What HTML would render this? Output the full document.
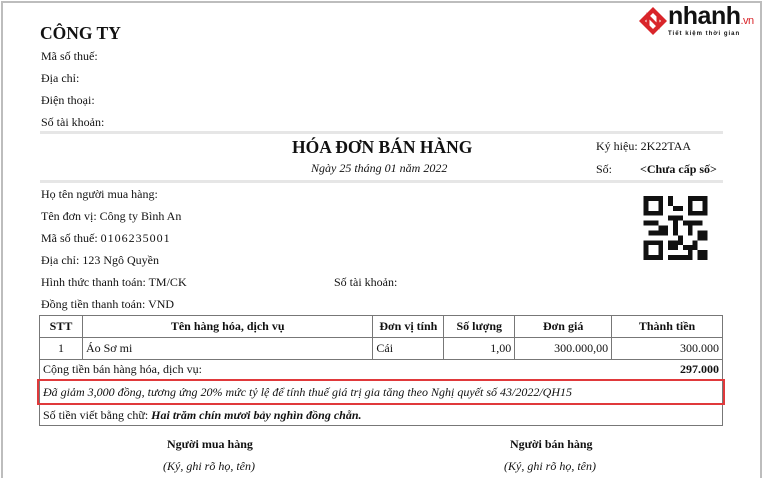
<!DOCTYPE html>
<html><head><meta charset="utf-8"><style>
*{margin:0;padding:0;box-sizing:border-box}
html,body{width:765px;height:478px;overflow:hidden}
body{background:#fff;font-family:"Liberation Serif",serif;font-size:12px;color:#111;position:relative}
.a{position:absolute;white-space:nowrap}
.frame{position:absolute;left:1px;top:1px;width:761px;height:477px;border:2px solid #bdbdbd;border-bottom:none}
.hl{position:absolute;height:3px;background:#e6e6e6}
table{position:absolute;left:39px;top:315px;width:684px;border-collapse:collapse}
td,th{border:1px solid #777;padding:0 3px;height:22px;font-size:12px}
th{font-weight:bold;text-align:center}
</style></head><body>
<div class="frame"></div>
<div class="a" style="left:40px;top:23px;font-size:17.5px;font-weight:bold">CÔNG TY</div>
<div class="a" style="left:41px;top:49px">Mã số thuế:</div>
<div class="a" style="left:41px;top:71px">Địa chỉ:</div>
<div class="a" style="left:41px;top:93px">Điện thoại:</div>
<div class="a" style="left:41px;top:115px">Số tài khoản:</div>
<div class="hl" style="left:40px;top:131px;width:683px"></div>
<div class="hl" style="left:40px;top:180px;width:683px"></div>

<svg class="a" style="left:638px;top:6px" width="30" height="30" viewBox="0 0 30 30"><polygon points="15,1 29,15 15,29 1,15" fill="#d9252a"/><polygon points="15,7 23,15 15,23 7,15" fill="#fff"/><path d="M10 21 V10 L20 20 V9" stroke="#d9252a" stroke-width="3" fill="none"/></svg>
<div class="a" style="left:668px;top:2px;font-family:'Liberation Sans',sans-serif;font-size:25px;font-weight:bold;color:#111;letter-spacing:-0.5px">nhanh<span style="font-size:11px;font-weight:normal;color:#d9252a">.vn</span></div>
<div class="a" style="left:668px;top:31px;font-family:'Liberation Sans',sans-serif;font-size:6px;font-weight:bold;letter-spacing:1px">Tiết kiệm thời gian</div>

<div class="a" style="left:292px;top:137px;font-size:17.5px;font-weight:bold">HÓA ĐƠN BÁN HÀNG</div>
<div class="a" style="left:311px;top:161px;font-style:italic">Ngày 25 tháng 01 năm 2022</div>
<div class="a" style="left:596px;top:139px">Ký hiệu: 2K22TAA</div>
<div class="a" style="left:596px;top:162px">Số:</div>
<div class="a" style="left:640px;top:162px;font-weight:bold">&lt;Chưa cấp số&gt;</div>

<svg class="a" style="left:643px;top:196px" width="65" height="64" viewBox="0 0 13 13" shape-rendering="crispEdges"><g fill="#111">
<path d="M0 0h4v4h-4zM9 0h4v4h-4zM0 9h4v4h-4z"/></g><g fill="#fff"><path d="M1 1h2v2h-2zM10 1h2v2h-2zM1 10h2v2h-2z"/></g>
<g fill="#111"><rect x="5" y="0" width="1" height="2"/><rect x="6" y="2" width="2" height="1"/><rect x="5" y="4" width="3" height="1"/><rect x="0" y="5" width="3" height="1"/><rect x="3" y="6" width="2" height="2"/><rect x="6" y="5" width="1" height="3"/><rect x="8" y="5" width="4" height="1"/><rect x="9" y="6" width="1" height="2"/><rect x="11" y="7" width="2" height="2"/><rect x="1" y="7" width="2" height="1"/><rect x="5" y="9" width="2" height="2"/><rect x="7" y="8" width="1" height="2"/><rect x="8" y="10" width="2" height="1"/><rect x="10" y="9" width="1" height="2"/><rect x="11" y="11" width="2" height="2"/><rect x="5" y="12" width="4" height="1"/><rect x="9" y="11" width="1" height="2"/></g></svg>

<div class="a" style="left:41px;top:187px">Họ tên người mua hàng:</div>
<div class="a" style="left:41px;top:209px">Tên đơn vị: Công ty Bình An</div>
<div class="a" style="left:41px;top:231px">Mã số thuế: <span style="letter-spacing:1px">0106235001</span></div>
<div class="a" style="left:41px;top:253px">Địa chỉ: 123 Ngô Quyền</div>
<div class="a" style="left:41px;top:275px">Hình thức thanh toán: TM/CK</div>
<div class="a" style="left:334px;top:275px">Số tài khoản:</div>
<div class="a" style="left:41px;top:297px">Đồng tiền thanh toán: VND</div>

<table>
<colgroup><col style="width:43px"><col style="width:291px"><col style="width:71px"><col style="width:71px"><col style="width:97px"><col style="width:111px"></colgroup>
<tr><th>STT</th><th>Tên hàng hóa, dịch vụ</th><th>Đơn vị tính</th><th>Số lượng</th><th>Đơn giá</th><th>Thành tiền</th></tr>
<tr><td style="text-align:center">1</td><td>Áo Sơ mi</td><td>Cái</td><td style="text-align:right">1,00</td><td style="text-align:right">300.000,00</td><td style="text-align:right">300.000</td></tr>
<tr><td colspan="6" style="height:20px">Cộng tiền bán hàng hóa, dịch vụ:<b style="float:right">297.000</b></td></tr>
<tr><td colspan="6" style="height:25px;font-style:italic">Đã giảm 3,000 đồng, tương ứng 20% mức tỷ lệ để tính thuế giá trị gia tăng theo Nghị quyết số 43/2022/QH15</td></tr>
<tr><td colspan="6" style="height:21px">Số tiền viết bằng chữ: <b><i>Hai trăm chín mươi bảy nghìn đồng chẵn.</i></b></td></tr>
</table>
<div class="a" style="left:37px;top:379px;width:688px;height:26px;border:2px solid #e0393b"></div>

<div class="a" style="left:167px;top:437px;font-weight:bold">Người mua hàng</div>
<div class="a" style="left:163px;top:459px;font-style:italic">(Ký, ghi rõ họ, tên)</div>
<div class="a" style="left:510px;top:437px;font-weight:bold">Người bán hàng</div>
<div class="a" style="left:504px;top:459px;font-style:italic">(Ký, ghi rõ họ, tên)</div>
</body></html>
